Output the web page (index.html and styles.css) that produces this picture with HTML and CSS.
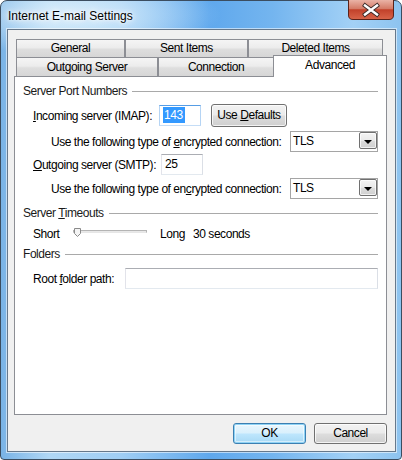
FILE: index.html
```html
<!DOCTYPE html>
<html>
<head>
<meta charset="utf-8">
<link rel="stylesheet" href="styles.css">
</head>
<body>
<div class="window">
  <div class="titlebar">
    <span class="title">Internet E-mail Settings</span>
    <div class="close">
      <svg width="46" height="20" viewBox="0 0 46 20">
        <defs>
          <linearGradient id="cg" x1="0" y1="0" x2="0" y2="1">
            <stop offset="0" stop-color="#eab3a6"/>
            <stop offset="0.45" stop-color="#d47a66"/>
            <stop offset="0.5" stop-color="#c2412a"/>
            <stop offset="1" stop-color="#d9654a"/>
          </linearGradient>
        </defs>
        <path d="M0.5 0 V15 Q0.5 19.5 5 19.5 H41 Q45.5 19.5 45.5 15 V0" fill="url(#cg)" stroke="#5b2219"/>
        <path d="M17 5.5 L29 14.5 M29 5.5 L17 14.5" stroke="#3a2a28" stroke-width="4.2" stroke-linecap="square"/>
        <path d="M17 5.5 L29 14.5 M29 5.5 L17 14.5" stroke="#ffffff" stroke-width="2.4" stroke-linecap="square"/>
      </svg>
    </div>
  </div>
  <div class="client">
    <div class="tabs">
      <div class="tabrow row1">
        <div class="tab t-general">General</div>
        <div class="tab t-sent">Sent Items</div>
        <div class="tab t-deleted">Deleted Items</div>
      </div>
      <div class="tabrow row2">
        <div class="tab t-outgoing">Outgoing Server</div>
        <div class="tab t-conn">Connection</div>
        <div class="tab t-adv selected">Advanced</div>
      </div>
    </div>
    <div class="panel">
      <div class="group first"><span>Server Port Numbers</span><i class="gline"></i></div>
      <div class="row r-in">
        <span class="lbl w-in"><u>I</u>ncoming server (IMAP):</span>
        <div class="textbox focused tb-in"><span class="sel">143</span></div>
        <div class="btn btn-defaults">Use <u>D</u>efaults</div>
      </div>
      <div class="row r-enc1">
        <span class="lbl">Use the following type of <u>e</u>ncrypted connection:</span>
        <div class="combo"><span class="cval">TLS</span><span class="cbtn"><i class="tri"></i></span></div>
      </div>
      <div class="row r-out">
        <span class="lbl w-out"><u>O</u>utgoing server (SMTP):</span>
        <div class="textbox tb-out">25</div>
      </div>
      <div class="row r-enc2">
        <span class="lbl">Use the following type of en<u>c</u>rypted connection:</span>
        <div class="combo"><span class="cval">TLS</span><span class="cbtn"><i class="tri"></i></span></div>
      </div>
      <div class="group g-time"><span>Server <u>T</u>imeouts</span><i class="gline"></i></div>
      <div class="row r-slider">
        <span class="lbl w-short">Short</span>
        <div class="slider">
          <div class="track"></div>
          <svg class="thumb" width="8" height="9" viewBox="0 0 8 9">
            <path d="M0.5 0.5 H6.5 V5.5 L3.5 8.5 L0.5 5.5 Z" fill="#f4f4f4" stroke="#8a8a8a"/>
          </svg>
        </div>
        <span class="lbl w-long">Long</span>
        <span class="lbl">30 seconds</span>
      </div>
      <div class="group g-fold"><span>Folders</span><i class="gline"></i></div>
      <div class="row r-root">
        <span class="lbl w-root">Root <u>f</u>older path:</span>
        <div class="textbox tb-root"></div>
      </div>
    </div>
    <div class="buttons">
      <div class="btn btn-ok">OK</div>
      <div class="btn btn-cancel">Cancel</div>
    </div>
  </div>
</div>
</body>
</html>
```
FILE: styles.css
```css
* { box-sizing: border-box; }
html, body { margin: 0; padding: 0; }
body {
  width: 402px;
  height: 460px;
  overflow: hidden;
  font-family: "Liberation Sans", Arial, sans-serif;
  font-size: 12px;
  letter-spacing: -0.45px;
  color: #000;
  background: #fff;
}
u { text-decoration: underline; text-underline-offset: 1px; }

.window {
  width: 402px;
  height: 460px;
  display: flex;
  flex-direction: column;
  border: 1px solid #3b4d60;
  border-radius: 7px 7px 4px 4px;
  padding: 0 5px 7px 6px;
  background:
    radial-gradient(ellipse 150px 40px at 70px 14px, rgba(225,242,252,0.85), rgba(225,242,252,0) 100%),
    linear-gradient(to right, #79b3e6 0%, #b0d7f5 12%, #a0cef4 30%, #5fa8ed 52%, #74b5ef 68%, #a3d1f6 88%, #8dc3ef 100%);
}

.titlebar {
  height: 28px;
  flex: none;
  display: flex;
  align-items: flex-start;
}
.title {
  margin-left: 1px;
  padding-top: 7px;
  line-height: 16px;
  font-size: 12px;
  letter-spacing: 0;
  color: #000;
  text-shadow: 0 0 6px rgba(255,255,255,0.95), 0 0 10px rgba(255,255,255,0.8), 0 0 3px #fff;
}
.close {
  margin-left: auto;
  margin-right: 2px;
  margin-top: -1px;
  width: 46px;
  height: 20px;
}
.close svg { display: block; }

.client {
  flex: 1;
  display: flex;
  flex-direction: column;
  background: #f0f0f0;
  border: 1px solid #66788b;
  box-shadow: 0 0 0 1px rgba(255,255,255,0.55);
}

.tabs {
  margin: 9px 0 0 8px;
  flex: none;
}
.tabrow { display: flex; align-items: flex-start; }
.row1 { height: 18px; }
.row2 { height: 19px; }
.tab {
  border: 1px solid #8c8e94;
  border-bottom: none;
  background: linear-gradient(#f5f5f5, #ececec 45%, #dedede 55%, #d6d6d6);
  text-align: center;
  white-space: nowrap;
}
.row1 .tab { height: 18px; line-height: 17px; }
.row2 .tab { height: 19px; line-height: 18px; }
.t-general { width: 109px; }
.t-sent { width: 123px; }
.t-deleted { width: 135px; }
.t-outgoing { width: 142px; }
.t-conn { width: 116px; }
.row2 .tab.selected {
  width: 114px;
  height: 22px;
  margin-left: -1px;
  margin-top: -2px;
  line-height: 16px;
  padding-top: 1px;
  background: #fff;
  position: relative;
  z-index: 2;
}

.panel {
  margin-left: 6px;
  width: 373px;
  height: 339px;
  flex: none;
  background: #fff;
  border: 1px solid #8c8e94;
  padding: 7px 8px 0 8px;
  display: flex;
  flex-direction: column;
}

.group {
  height: 14px;
  display: flex;
  align-items: center;
  white-space: nowrap;
  color: #1a1a1a;
}
.gline {
  flex: 1;
  height: 1px;
  background: #a9a9a9;
  margin-left: 5px;
  margin-top: 1px;
}
.g-time { margin-top: 7px; }
.g-fold { margin-top: 4px; }

.row {
  display: flex;
  align-items: center;
  white-space: nowrap;
}
.lbl { flex: none; }
.r-in { margin-top: 6px; height: 23px; padding-left: 10px; }
.r-enc1 { margin-top: 4px; height: 21px; padding-left: 28px; }
.r-out { margin-top: 2px; height: 21px; padding-left: 10px; }
.r-enc2 { margin-top: 3px; height: 21px; padding-left: 28px; }
.r-slider { margin-top: 4px; height: 19px; padding-left: 10px; }
.r-root { margin-top: 7px; height: 21px; padding-left: 10px; }

.w-in { width: 126px; }
.w-out { width: 128px; }
.w-short { width: 40px; }
.w-long { width: 33px; }
.w-root { width: 92px; }

.textbox {
  height: 21px;
  border: 1px solid #abadb3;
  border-left-color: #e2e3ea;
  border-right-color: #dbdfe6;
  border-bottom-color: #e3e9ef;
  background: #fff;
  padding: 0 3px;
  line-height: 19px;
}
.textbox.focused {
  border-color: #569de5;
  border-left-color: #b5d4f4;
  border-right-color: #b5d4f4;
  border-bottom-color: #c5ddf6;
}
.tb-in { width: 42px; }
.tb-out { width: 42px; }
.tb-root { flex: 1; }
.sel {
  display: inline-block;
  background: #3399ff;
  color: #fff;
  line-height: 16px;
  padding: 0 2px 0 1px;
}

.btn {
  border: 1px solid #707070;
  border-radius: 3px;
  background: linear-gradient(#f2f2f2, #ebebeb 48%, #dddddd 52%, #cfcfcf);
  box-shadow: inset 0 0 0 1px rgba(255,255,255,0.75);
  text-align: center;
  flex: none;
}
.btn-defaults {
  margin-left: 10px;
  width: 76px;
  height: 23px;
  line-height: 21px;
}

.combo {
  margin-left: auto;
  width: 88px;
  height: 21px;
  border: 1px solid #a5a5a5;
  background: #fff;
  display: flex;
  align-items: flex-start;
}
.cval { flex: 1; padding-left: 2px; line-height: 18px; }
.cbtn {
  width: 18px;
  height: 17px;
  border: 1px solid #707070;
  border-radius: 2px;
  background: linear-gradient(#f4f4f4, #e9e9e9 50%, #dcdcdc 51%, #d0d0d0);
  box-shadow: inset 0 0 0 1px rgba(255,255,255,0.7);
  display: flex;
  align-items: center;
  justify-content: center;
}
.tri {
  width: 0;
  height: 0;
  border-left: 4px solid transparent;
  border-right: 4px solid transparent;
  border-top: 4px solid #000;
  margin-top: 2px;
}

.slider {
  position: relative;
  width: 74px;
  height: 19px;
  flex: none;
}
.track {
  margin-top: 6px;
  height: 3px;
  border: 1px solid #b4b4b4;
  border-bottom-color: #e6e6e6;
  background: #e8e8e8;
}
.thumb {
  position: absolute;
  left: 1px;
  top: 4px;
  display: block;
}
.slider + .lbl { margin-left: 13px; }

.buttons {
  display: flex;
  justify-content: flex-end;
  gap: 8px;
  margin: 8px 8px 0 0;
}
.btn-ok, .btn-cancel {
  width: 73px;
  height: 21px;
  line-height: 19px;
}
.btn-ok {
  border-color: #3c7fb1;
  background: linear-gradient(#eaf6fd, #d9f0fc 48%, #bee6fd 52%, #a7d9f5);
  box-shadow: inset 0 0 0 1px #8fd3f5, inset 0 0 0 2px rgba(255,255,255,0.5);
}
```
